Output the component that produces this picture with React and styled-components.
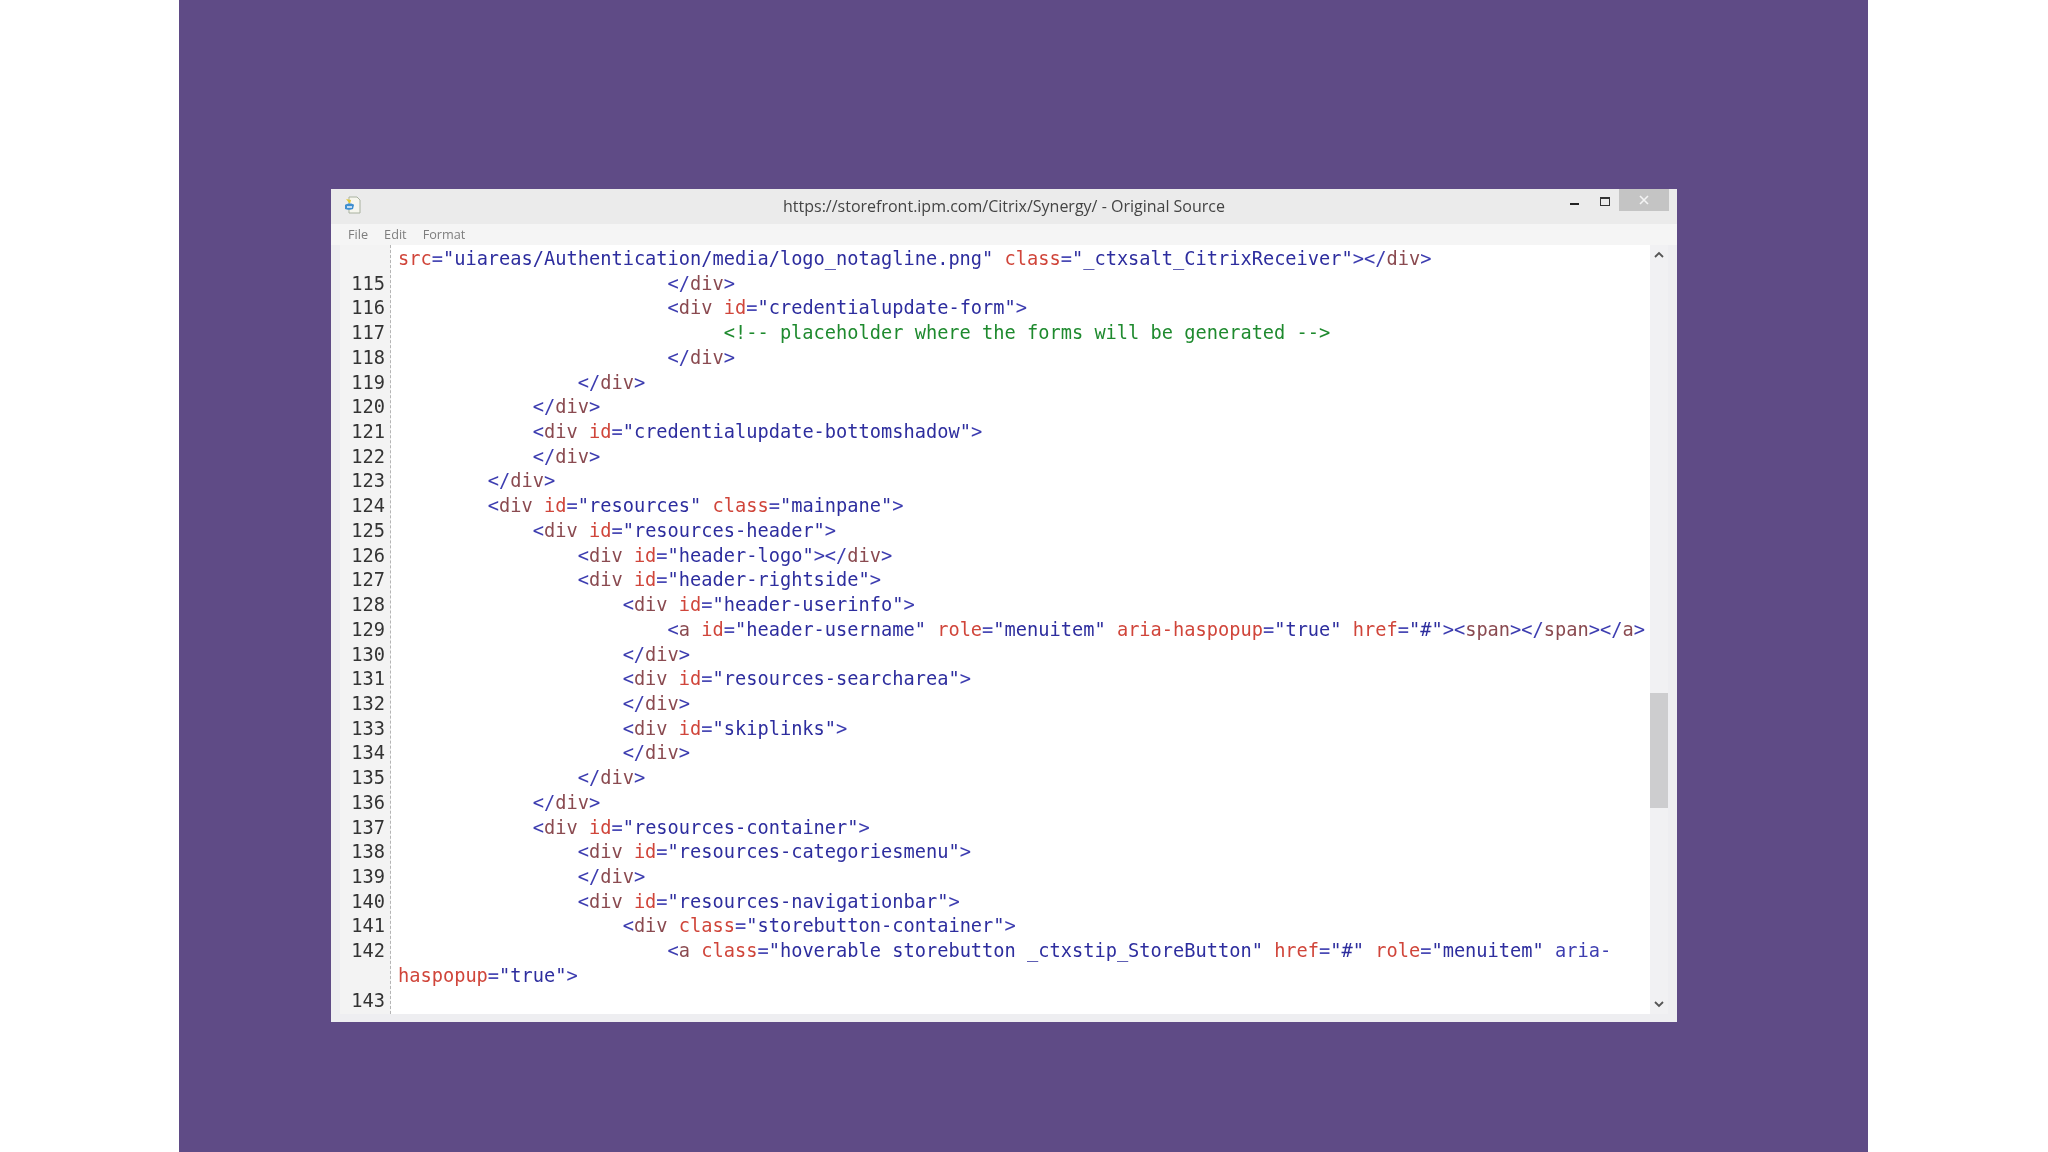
import styled, { createGlobalStyle } from "styled-components";

const GlobalStyle = createGlobalStyle`
  html, body {
    margin: 0;
    padding: 0;
    background: #fff;
  }
`;

const Backdrop = styled.div`
  width: 1689px;
  height: 1152px;
  margin-left: 179px;
  padding: 189px 0 0 152px;
  box-sizing: border-box;
  background: #5f4b86;
`;

const Window = styled.div`
  width: 1346px;
  height: 833px;
  display: flex;
  flex-direction: column;
  background: #eeeef1;
  filter: blur(0.5px);
`;

const TitleBar = styled.div`
  height: 35px;
  flex: none;
  display: flex;
  align-items: flex-start;
  position: relative;
  background: #ebebeb;
`;

const AppIcon = styled.svg`
  width: 18px;
  height: 18px;
  margin: 7px 0 0 13px;
`;

const TitleText = styled.div`
  position: absolute;
  left: 0;
  right: 0;
  top: 5px;
  text-align: center;
  font: 16px/24px "Open Sans", sans-serif;
  color: #444;
`;

const Controls = styled.div`
  margin-left: auto;
  margin-right: 8px;
  display: flex;
  align-items: flex-start;
  position: relative;
`;

const ControlIcon = styled.svg`
  width: 12px;
  height: 12px;
  margin: 8px ${(p) => p.$gap}px 0 0;
`;

const CloseButton = styled.div`
  width: 50px;
  height: 22px;
  display: flex;
  align-items: center;
  justify-content: center;
  background: #c4c4c4;
`;

const MenuBar = styled.div`
  height: 21px;
  flex: none;
  display: flex;
  gap: 16px;
  padding-left: 17px;
  box-sizing: border-box;
  background: #f5f5f5;
  font: 12.7px/20px "Open Sans", sans-serif;
  color: #7d7d7d;
`;

const Body = styled.div`
  flex: 1;
  min-height: 0;
  display: flex;
  margin: 0 9px 8px 9px;
  background: #fff;
`;

const Gutter = styled.div`
  width: 51px;
  flex: none;
  padding-top: 2px;
  box-sizing: border-box;
  background: #f3f3f3;
  border-right: 1px dashed #b5b5b5;
  font: 18.67px/24.73px "DejaVu Sans Mono", monospace;
  color: #333;
  text-align: right;
`;

const GutterRow = styled.div`
  height: 24.73px;
  padding-right: 5px;
`;

const Code = styled.pre`
  flex: 1;
  margin: 0;
  padding: 2px 0 0 7px;
  overflow: hidden;
  font: 18.67px/24.73px "DejaVu Sans Mono", monospace;
  color: #3a3aa8;
`;

const CodeRow = styled.div`
  height: 24.73px;
  white-space: pre;
`;

const Token = styled.span`
  color: ${(p) => p.$color};
`;

const ScrollTrack = styled.div`
  width: 18px;
  flex: none;
  position: relative;
  background: #f1f1f3;
`;

const ScrollArrow = styled.svg`
  position: absolute;
  left: 4px;
  width: 10px;
  height: 7px;
  top: ${(p) => p.$top}px;
`;

const ScrollThumb = styled.div`
  position: absolute;
  left: 0;
  right: 0;
  top: 448px;
  height: 115px;
  background: #cdcdcf;
`;

const colors = {
  punct: "#3d3db0",
  tag: "#8a4a50",
  attr: "#d0453a",
  eq: "#4a4ab5",
  value: "#2d2d9e",
  comment: "#1e8a2e",
};

// splits a source line into coloured pieces
function tokenize(line) {
  const out = [];
  if (line.trim().startsWith("<!--")) return [["comment", line]];
  const re = /("[^"]*")|(<\/?[a-z]+|>)|(=)|([a-z-]+(?==))|(\s+)|(.)/g;
  let m;
  while ((m = re.exec(line))) {
    if (m[1]) out.push(["value", m[1]]);
    else if (m[2]) {
      if (m[2][0] === "<") {
        const n = m[2][1] === "/" ? 2 : 1;
        out.push(["punct", m[2].slice(0, n)]);
        out.push(["tag", m[2].slice(n)]);
      } else out.push(["punct", ">"]);
    } else if (m[3]) out.push(["eq", "="]);
    else if (m[4]) out.push(["attr", m[4]]);
    else out.push(["punct", m[0]]);
  }
  return out;
}

const pad = (n) => " ".repeat(n);

const rows = [
  ["", 'src="uiareas/Authentication/media/logo_notagline.png" class="_ctxsalt_CitrixReceiver"></div>'],
  ["115", pad(24) + "</div>"],
  ["116", pad(24) + '<div id="credentialupdate-form">'],
  ["117", pad(29) + "<!-- placeholder where the forms will be generated -->"],
  ["118", pad(24) + "</div>"],
  ["119", pad(16) + "</div>"],
  ["120", pad(12) + "</div>"],
  ["121", pad(12) + '<div id="credentialupdate-bottomshadow">'],
  ["122", pad(12) + "</div>"],
  ["123", pad(8) + "</div>"],
  ["124", pad(8) + '<div id="resources" class="mainpane">'],
  ["125", pad(12) + '<div id="resources-header">'],
  ["126", pad(16) + '<div id="header-logo"></div>'],
  ["127", pad(16) + '<div id="header-rightside">'],
  ["128", pad(20) + '<div id="header-userinfo">'],
  ["129", pad(24) + '<a id="header-username" role="menuitem" aria-haspopup="true" href="#"><span></span></a>'],
  ["130", pad(20) + "</div>"],
  ["131", pad(20) + '<div id="resources-searcharea">'],
  ["132", pad(20) + "</div>"],
  ["133", pad(20) + '<div id="skiplinks">'],
  ["134", pad(20) + "</div>"],
  ["135", pad(16) + "</div>"],
  ["136", pad(12) + "</div>"],
  ["137", pad(12) + '<div id="resources-container">'],
  ["138", pad(16) + '<div id="resources-categoriesmenu">'],
  ["139", pad(16) + "</div>"],
  ["140", pad(16) + '<div id="resources-navigationbar">'],
  ["141", pad(20) + '<div class="storebutton-container">'],
  ["142", pad(24) + '<a class="hoverable storebutton _ctxstip_StoreButton" href="#" role="menuitem" aria-'],
  ["", 'haspopup="true">'],
  ["143", ""],
];

export default function App() {
  return (
    <>
      <GlobalStyle />
      <Backdrop>
        <Window>
          <TitleBar>
            <AppIcon viewBox="0 0 18 18">
              <path d="M5 1h8l3 3v13H5z" fill="#f6f6ee" stroke="#a9b2a0" />
              <path d="M2 3l5 1-1 4z" fill="#e2c83a" />
              <path d="M1 9c2-2 8-2 9 0l-1 4c-2 1-6 1-8 0z" fill="#3f8fd0" />
              <path d="M3 11h5" stroke="#fff" strokeWidth="1.4" />
            </AppIcon>
            <TitleText>https://storefront.ipm.com/Citrix/Synergy/ - Original Source</TitleText>
            <Controls>
              <ControlIcon $gap={18} viewBox="0 0 12 12">
                <rect x="1" y="6" width="9" height="2" fill="#222" />
              </ControlIcon>
              <ControlIcon $gap={8} viewBox="0 0 12 12">
                <rect x="1.5" y="0.5" width="9" height="8" fill="none" stroke="#333" />
                <rect x="1" y="0" width="10" height="2" fill="#333" />
              </ControlIcon>
              <CloseButton>
                <svg width="10" height="10" viewBox="0 0 10 10">
                  <path d="M1 1l8 8M9 1l-8 8" stroke="#f4f4f4" strokeWidth="1.6" />
                </svg>
              </CloseButton>
            </Controls>
          </TitleBar>
          <MenuBar>
            <span>File</span>
            <span>Edit</span>
            <span>Format</span>
          </MenuBar>
          <Body>
            <Gutter>
              {rows.map((r, i) => (
                <GutterRow key={i}>{r[0]}</GutterRow>
              ))}
            </Gutter>
            <Code>
              {rows.map((r, i) => (
                <CodeRow key={i}>
                  {tokenize(r[1]).map((t, j) => (
                    <Token key={j} $color={colors[t[0]]}>{t[1]}</Token>
                  ))}
                </CodeRow>
              ))}
            </Code>
            <ScrollTrack>
              <ScrollArrow $top={6} viewBox="0 0 10 7">
                <path d="M1 6l4-4 4 4" fill="none" stroke="#555" strokeWidth="1.8" />
              </ScrollArrow>
              <ScrollThumb />
              <ScrollArrow $top={756} viewBox="0 0 10 7">
                <path d="M1 1l4 4 4-4" fill="none" stroke="#555" strokeWidth="1.8" />
              </ScrollArrow>
            </ScrollTrack>
          </Body>
        </Window>
      </Backdrop>
    </>
  );
}
